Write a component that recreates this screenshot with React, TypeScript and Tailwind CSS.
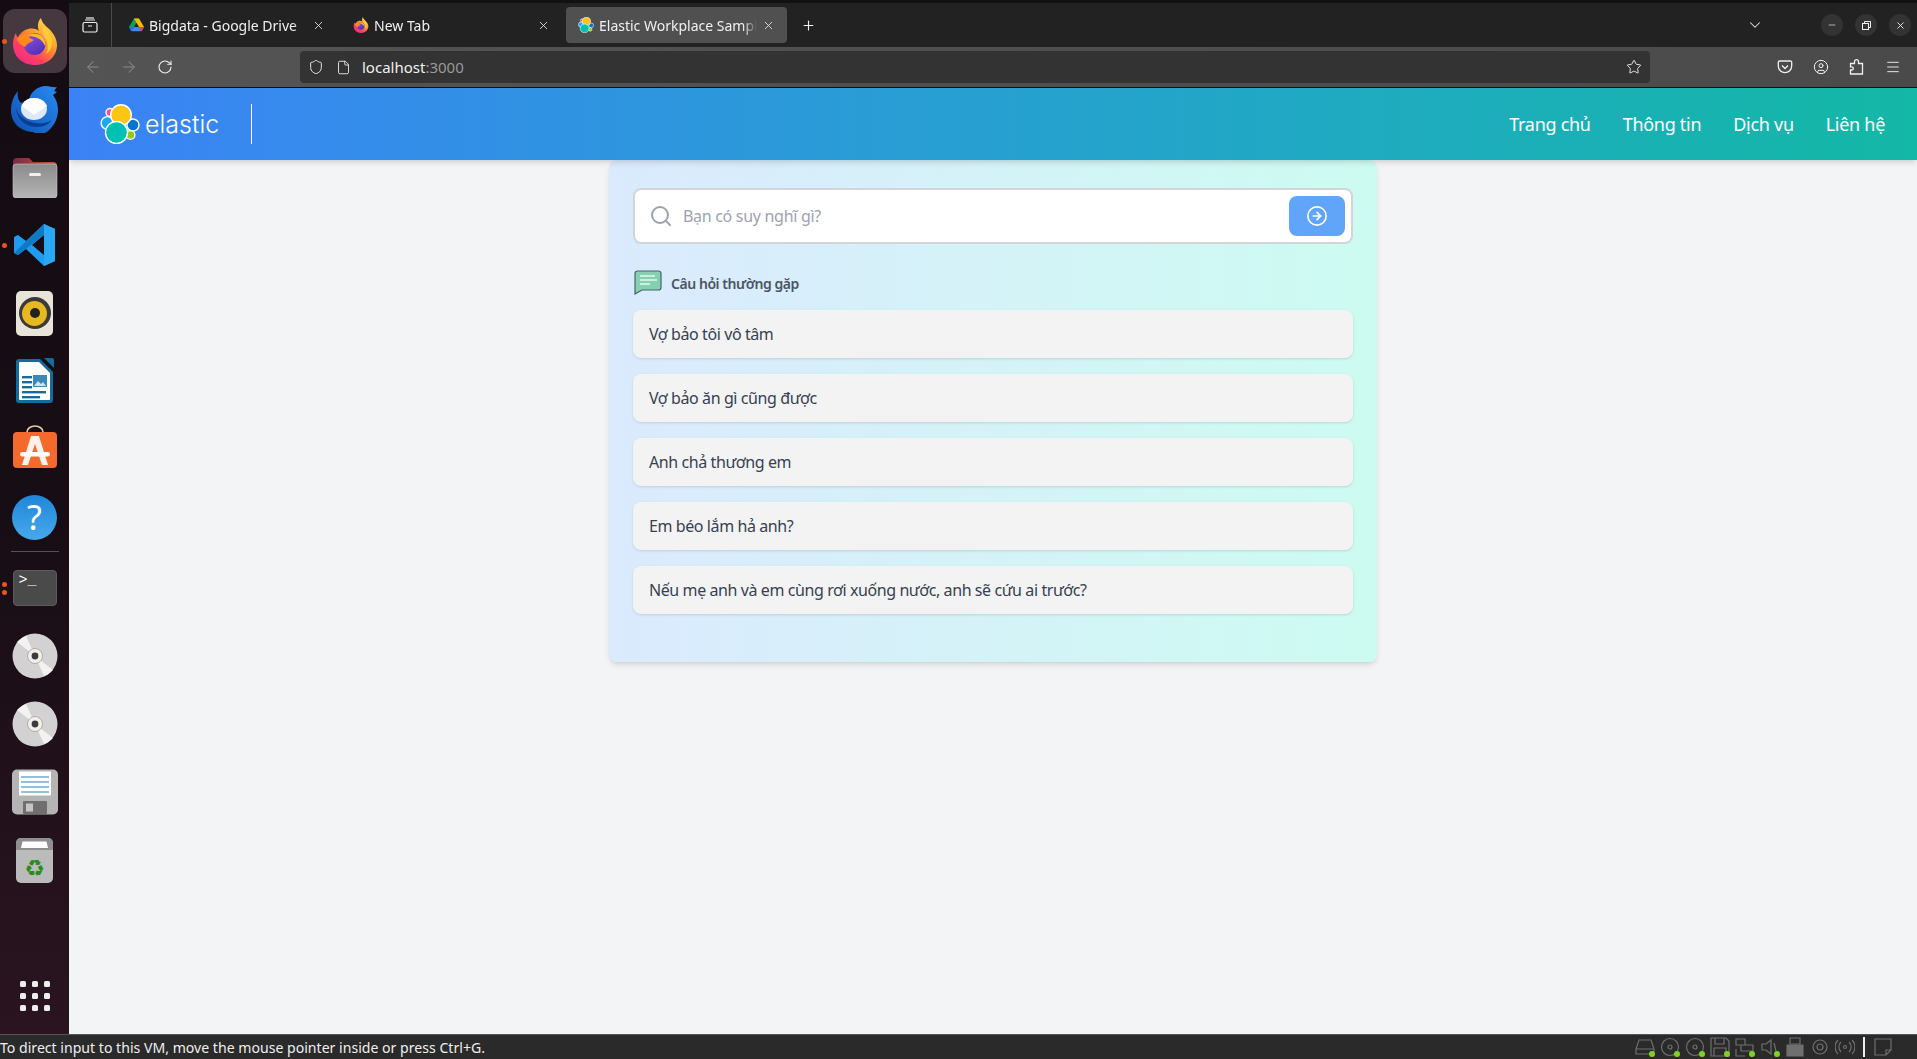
import React from "react";
import {
  ArrowLeft, ArrowRight, RotateCw, Shield, File, Star, CircleUser, Menu, X, Plus,
  ChevronDown, Minus, Search, CircleArrowRight,
} from "lucide-react";

const ui = { fontFamily: '"Noto Sans", sans-serif' };

function ElasticLogo({ size = 40 }: { size?: number }) {
  return (
    <svg width={size} height={size} viewBox="0 0 40 40">
      <g stroke="#fff" strokeWidth="1.4">
        <circle cx="10" cy="8.5" r="4" fill="#f04e98" />
        <circle cx="7.5" cy="19" r="6.4" fill="#1ba9f5" />
        <circle cx="33" cy="21" r="6" fill="#0077cc" />
        <circle cx="30.5" cy="31" r="4.4" fill="#93c90e" />
        <circle cx="21" cy="11" r="10.3" fill="#fec514" />
        <circle cx="16.5" cy="28.5" r="11" fill="#00bfb3" />
      </g>
    </svg>
  );
}

function GoogleDrive() {
  return (
    <svg width="15" height="14" viewBox="0 0 15 14">
      <path d="M5 0.5h5l-5 8.5H0z" fill="#0f9d58" />
      <path d="M10 0.5L15 9h-5L5 0.5z" fill="#fbbc04" />
      <path d="M0 9h15l-2.4 4.3H2.4z" fill="#4285f4" />
      <path d="M0 9h5l-2.6 4.3z" fill="#1a73e8" />
      <path d="M10 9h5l-2.4 4.3z" fill="#ea4335" />
    </svg>
  );
}

function Firefox({ size = 48 }: { size?: number }) {
  const id = `ff${size}`;
  return (
    <svg width={size} height={size} viewBox="0 0 48 48">
      <defs>
        <linearGradient id={`${id}a`} x1="0.85" y1="0.05" x2="0.2" y2="0.95">
          <stop offset="0" stopColor="#ffe14d" />
          <stop offset="0.4" stopColor="#ff9a2e" />
          <stop offset="0.75" stopColor="#ff3f5e" />
          <stop offset="1" stopColor="#f52a8a" />
        </linearGradient>
        <linearGradient id={`${id}b`} x1="0.2" y1="0" x2="0.8" y2="1">
          <stop offset="0" stopColor="#8f4fe0" />
          <stop offset="1" stopColor="#4b2fb5" />
        </linearGradient>
      </defs>
      <path d="M30 1c1 5 4 7 7 10 7 6 9 13 9 17 0 11-9 20-22 20S2 39 2 27c0-4 1-8 3-11 0 2 1 4 2 4 2-4 6-7 10-8 5-1 9 0 11 2-2-5-1-10 2-13z" fill={`url(#${id}a)`} />
      <path d="M33 9c5 4 9 11 8 18-1 5-3 8-6 10 3-6 2-13-2-18-2-3-2-7 0-10z" fill="#ffcb2e" />
      <circle cx="23.5" cy="27" r="11" fill={`url(#${id}b)`} />
      <path d="M6 22c4-5 9-7 15-6l5 2c-3 0-7 0-8 2 1 2 4 2 5 3-2 2-7 3-9 7-3-2-7-4-8-8z" fill="#ff8a1f" />
      <path d="M17 19c4-3 11-3 15 1 2 3 3 6 2 9-2-5-6-8-10-9-3-1-5-1-7-1z" fill="#ffb52e" />
    </svg>
  );
}

function Thunderbird() {
  return (
    <svg width="50" height="48" viewBox="0 0 50 48">
      <defs>
        <linearGradient id="tb" x1="0" y1="1" x2="1" y2="0">
          <stop offset="0" stopColor="#0b4eb0" />
          <stop offset="1" stopColor="#2a8cf0" />
        </linearGradient>
      </defs>
      <path d="M24 47C10 47 1 37 1 26 1 18 3 12 8 6c-1 5 0 9 3 12 3-1 5-2 8-3 1-7 8-14 17-14 4 0 8 2 11 1l-3 4 3 1-4 3c3 4 5 9 5 15 0 14-11 26-24 26z" fill="url(#tb)" />
      <path d="M6 24c1 10 9 18 21 18 7 0 12-3 15-7-5 3-11 4-16 3-9-1-17-6-20-14z" fill="#0a3d96" />
      <ellipse cx="24" cy="24" rx="13" ry="11" fill="#dde8f8" />
      <path d="M11.5 21l12.5 9 13-9c-2-5-7-8-13-8s-10 3-12.500 8z" fill="#fff" />
    </svg>
  );
}

function Folder() {
  return (
    <svg width="46" height="42" viewBox="0 0 46 42">
      <defs>
        <linearGradient id="fdt" x1="0" y1="0" x2="1" y2="0">
          <stop offset="0" stopColor="#7a2a4a" />
          <stop offset="1" stopColor="#d0522a" />
        </linearGradient>
        <linearGradient id="fdb" x1="0" y1="0" x2="0" y2="1">
          <stop offset="0" stopColor="#8b8b8b" />
          <stop offset="1" stopColor="#b5b5b5" />
        </linearGradient>
      </defs>
      <path d="M1 6a4 4 0 014-4h12l4 4h20a4 4 0 014 4v10H1z" fill="url(#fdt)" />
      <path d="M1 11a3 3 0 013-3h38a3 3 0 013 3v28a3 3 0 01-3 3H4a3 3 0 01-3-3z" fill="url(#fdb)" stroke="#c8c8c8" strokeWidth="0.6" />
      <rect x="17" y="17" width="12" height="3" rx="1.5" fill="#f0f0f0" />
    </svg>
  );
}

function VSCode() {
  return (
    <svg width="44" height="44" viewBox="0 0 44 44">
      <path d="M31 1l11 5v32l-11 5-18-17-8 6-4-2V14l4-2 8 6zM31 12L19 22l12 10z" fill="#1f9cf0" />
      <path d="M1 30l30-29v11L5 32z" fill="#0f7ac4" />
      <path d="M31 1l11 5v32l-11 5z" fill="#29a9f5" />
    </svg>
  );
}

function Rhythmbox() {
  return (
    <div className="w-[37px] h-[45px] rounded-[5px] bg-[#e8e4d9] flex items-center justify-center">
      <div className="w-8 h-8 rounded-full bg-[#3a3a38] flex items-center justify-center">
        <div className="w-[25px] h-[25px] rounded-full bg-[#e8b820] flex items-center justify-center">
          <div className="w-[10px] h-[10px] rounded-full bg-[#222]" />
        </div>
      </div>
    </div>
  );
}

function Writer() {
  return (
    <svg width="38" height="46" viewBox="0 0 38 46">
      <path d="M3 1h21l13 13v28a3 3 0 01-3 3H3a3 3 0 01-3-3V4a3 3 0 013-3z" fill="#156a9e" />
      <path d="M4 4h19l11 11v26a1 1 0 01-1 1H4a1 1 0 01-1-1V5a1 1 0 011-1z" fill="#fff" />
      <path d="M28 0h8a2 2 0 012 2v8z" fill="#156a9e" />
      <rect x="6" y="18" width="10" height="2.4" fill="#156a9e" />
      <rect x="6" y="23" width="10" height="2.4" fill="#156a9e" />
      <rect x="6" y="28" width="10" height="2.4" fill="#156a9e" />
      <rect x="6" y="33" width="24" height="2.4" fill="#156a9e" />
      <rect x="6" y="38" width="18" height="2.4" fill="#156a9e" />
      <rect x="17" y="17" width="14" height="12" fill="#3b89b8" />
      <path d="M18 28l4-5 3 3 2-2 3 4z" fill="#cfe4f0" />
    </svg>
  );
}

function AppCenter() {
  return (
    <svg width="46" height="44" viewBox="0 0 46 44" className="-mt-[4px]">
      <path d="M15 9V7a8 6 0 0116 0v2" fill="none" stroke="#e8c8a0" strokeWidth="1.6" />
      <rect x="1" y="7" width="44" height="36" rx="4" fill="#f4692c" />
      <path d="M19 11h8l9 29h-6l-7-21-7 21h-6z" fill="#fff" opacity="0.9" />
      <rect x="8" y="27" width="30" height="4.4" rx="2.2" fill="#fff" />
    </svg>
  );
}

function Disc() {
  return (
    <svg width="46" height="46" viewBox="0 0 46 46">
      <circle cx="23" cy="23" r="22.5" fill="#d2d2d2" />
      <path d="M23 23L5 9a22.5 22.5 0 019-6zM23 23l18 14a22.5 22.5 0 01-9 6z" fill="#f2f2f2" />
      <circle cx="23" cy="23" r="7.5" fill="#f2efe8" stroke="#a89f8c" strokeWidth="0.8" />
      <circle cx="23" cy="23" r="3.4" fill="#3c3c3c" />
    </svg>
  );
}

function Floppy() {
  return (
    <svg width="46" height="46" viewBox="0 0 46 46">
      <rect width="46" height="45" y="0.5" rx="5" fill="#b4b4b4" />
      <rect x="7" y="2.5" width="32" height="24" fill="#fff" />
      <path d="M9 8h28M9 13h28M9 18h28M9 23h28" stroke="#1b85b8" strokeWidth="1" />
      <rect x="11" y="32" width="24" height="13" rx="1" fill="#6f6f6f" />
      <rect x="14" y="34.5" width="7" height="8" fill="#c6c6c6" />
    </svg>
  );
}

function Trash() {
  return (
    <div className="relative w-[37px] h-[45px] rounded-[5px] bg-[#bbbbbb] flex items-end justify-center overflow-hidden">
      <svg width="37" height="12" viewBox="0 0 37 12" className="absolute top-0 left-0">
        <rect width="37" height="12" fill="#8f8f8f" />
        <path d="M5 10l1.500-6.500h24L32 10z" fill="#fff" />
      </svg>
      <span className="text-[#2a8c1c] text-[23px] leading-[30px] font-['DejaVu_Sans',sans-serif]">♻</span>
    </div>
  );
}

function DockItem({ dots = 0, children }: { dots?: number; children: React.ReactNode }) {
  return (
    <div className="relative h-[68px] flex items-center justify-center shrink-0">
      {dots > 0 && (
        <div className="absolute left-[2px] top-0 bottom-0 flex flex-col justify-center gap-[3px]">
          {Array.from({ length: dots }).map((_, i) => (
            <span key={i} className="block w-[5px] h-[5px] rounded-full bg-[#e95420]" />
          ))}
        </div>
      )}
      {children}
    </div>
  );
}

function Dock() {
  return (
    <aside className="w-[69px] shrink-0 flex flex-col pt-[7px] pb-[23px] bg-gradient-to-b from-[#150c13] via-[#170d15] to-[#2a1420]">
      <DockItem dots={1}>
        <div className="w-16 h-16 rounded-[12px] bg-[#45393f] flex items-center justify-center">
          <Firefox />
        </div>
      </DockItem>
      <DockItem><Thunderbird /></DockItem>
      <DockItem><Folder /></DockItem>
      <DockItem dots={1}><VSCode /></DockItem>
      <DockItem><Rhythmbox /></DockItem>
      <DockItem><Writer /></DockItem>
      <DockItem><AppCenter /></DockItem>
      <DockItem>
        <div className="w-[45px] h-[45px] rounded-full bg-gradient-to-b from-[#1f86d8] to-[#45aaeb] flex items-center justify-center text-white text-[34px] leading-none" style={ui}>?</div>
      </DockItem>
      <div className="h-[3px] shrink-0 flex items-start justify-center">
        <div className="w-12 h-px bg-[#55505a]" />
      </div>
      <DockItem dots={2}>
        <div className="w-11 h-9 rounded-[4px] bg-[#4a4a4a] border border-[#5c5c5c] px-[5px] text-white text-[15px] leading-[20px] font-['Liberation_Mono',monospace]">
          &gt;_
        </div>
      </DockItem>
      <DockItem><Disc /></DockItem>
      <DockItem><Disc /></DockItem>
      <DockItem><Floppy /></DockItem>
      <DockItem><Trash /></DockItem>
      <div className="mt-auto flex justify-center">
        <div className="grid grid-cols-3 gap-[6px]">
          {Array.from({ length: 9 }).map((_, i) => (
            <span key={i} className="block w-[6px] h-[6px] rounded-[1.5px] bg-[#eeeeee]" />
          ))}
        </div>
      </div>
    </aside>
  );
}

function Tab({ icon, title, active }: { icon: React.ReactNode; title: string; active?: boolean }) {
  return (
    <div className={`w-[221px] h-[36px] shrink-0 rounded-[4px] flex items-center pl-[12px] pr-[12px] gap-[5px] text-[14px] text-[#f0f0f0] ${active ? "bg-[#505050]" : ""}`}>
      <span className="w-4 h-4 shrink-0 flex items-center justify-center">{icon}</span>
      <span className="flex-1 overflow-hidden whitespace-nowrap [mask-image:linear-gradient(to_left,transparent,black_14px)]">{title}</span>
      <X size={13} strokeWidth={1.6} className="shrink-0 text-[#e5e5e5]" />
    </div>
  );
}

function WinButton({ children }: { children: React.ReactNode }) {
  return (
    <div className="w-[22px] h-[22px] rounded-full bg-[#333333] flex items-center justify-center text-[#f0f0f0]">
      {children}
    </div>
  );
}

function Browser() {
  return (
    <div className="shrink-0" style={ui}>
      <div className="h-[3px] bg-[#111111]" />
      <div className="h-[44px] bg-[#222222] flex items-center">
        <div className="w-[42px] flex justify-center">
          <svg width="16" height="16" viewBox="0 0 16 16" fill="none" stroke="#f0f0f0" strokeWidth="1.2">
            <rect x="1" y="5.500" width="14" height="9.500" rx="1.500" />
            <path d="M3 3h10M6 9h4" />
            <path d="M4 1h8" />
          </svg>
        </div>
        <div className="w-px h-[44px] bg-[#4a4a4a]" />
        <div className="flex gap-[4px] ml-[4px]">
          <Tab icon={<GoogleDrive />} title="Bigdata - Google Drive" />
          <Tab icon={<Firefox size={16} />} title="New Tab" />
          <Tab icon={<ElasticLogo size={16} />} title="Elastic Workplace Sample" active />
        </div>
        <Plus size={15} strokeWidth={1.8} className="ml-[14px] text-[#f0f0f0]" />
        <div className="flex-1" />
        <ChevronDown size={18} strokeWidth={1.4} className="text-[#e5e5e5] mr-[57px]" />
        <div className="flex gap-[12px] mr-[6px]">
          <WinButton><Minus size={10} strokeWidth={1.6} /></WinButton>
          <WinButton>
            <svg width="9" height="9" viewBox="0 0 9 9" fill="none" stroke="currentColor" strokeWidth="1"><rect x="0.500" y="2.500" width="6" height="6" /><path d="M2.500 2.500v-2h6v6h-2" /></svg>
          </WinButton>
          <WinButton><X size={11} strokeWidth={2} /></WinButton>
        </div>
      </div>
      <div className="h-[41px] bg-gradient-to-r from-[#545454] to-[#4a4a4a] flex items-center border-b border-[#111111]">
        <div className="w-[231px] shrink-0 pl-[15px] flex items-center gap-[18px]">
          <ArrowLeft size={18} strokeWidth={1.4} className="text-[#8a8a8a]" />
          <ArrowRight size={18} strokeWidth={1.4} className="text-[#8a8a8a]" />
          <RotateCw size={16} strokeWidth={1.6} className="text-[#f0f0f0] ml-[1px]" />
        </div>
        <div className="w-[1350px] h-[32px] rounded-[4px] bg-[#333333] flex items-center pl-[8px] pr-[8px] text-[#f0f0f0]">
          <Shield size={16} strokeWidth={1.4} />
          <File size={15} strokeWidth={1.4} className="ml-[12px]" />
          <span className="ml-[11px] text-[15px]">localhost<span className="text-[#9a9a9a]">:3000</span></span>
          <Star size={16} strokeWidth={1.4} className="ml-auto" />
        </div>
        <div className="flex-1 flex justify-end items-center gap-[20px] pr-[16px] text-[#f0f0f0]">
          <svg width="16" height="16" viewBox="0 0 16 16" fill="none" stroke="currentColor" strokeWidth="1.3">
            <path d="M2.500 2h11a1.200 1.200 0 011.200 1.200V7a6.700 6.700 0 01-13.400 0V3.200A1.200 1.200 0 012.500 2z" />
            <path d="M5 6.500l3 3 3-3" />
          </svg>
          <CircleUser size={16} strokeWidth={1.5} />
          <svg width="16" height="16" viewBox="0 0 16 16" fill="none" stroke="currentColor" strokeWidth="1.300">
            <path d="M1.500 15v-4h1.200a1.600 1.600 0 000-3.200H1.500V4.500h4V2.700a2 2 0 014 0v1.800h4V15z" />
          </svg>
          <Menu size={16} strokeWidth={1.4} />
        </div>
      </div>
    </div>
  );
}

function Header() {
  return (
    <header className="h-[72px] shrink-0 flex items-center justify-between pl-[31px] pr-[32px] bg-gradient-to-r from-[#3b82f6] to-[#14b8a6] shadow-md relative z-10 font-['Noto_Sans',sans-serif]">
      <div className="flex items-center">
        <ElasticLogo />
        <span className="ml-[5px] text-[25px] leading-none font-light text-white font-['Inter',sans-serif]">elastic</span>
        <div className="w-px h-10 bg-white ml-[32px]" />
      </div>
      <nav className="flex gap-[32px] text-[18px] tracking-[-0.29px] text-white">
        <span>Trang chủ</span>
        <span>Thông tin</span>
        <span>Dịch vụ</span>
        <span>Liên hệ</span>
      </nav>
    </header>
  );
}

const questions = [
  "Vợ bảo tôi vô tâm",
  "Vợ bảo ăn gì cũng được",
  "Anh chả thương em",
  "Em béo lắm hả anh?",
  "Nếu mẹ anh và em cùng rơi xuống nước, anh sẽ cứu ai trước?",
];

function ChatIcon() {
  return (
    <svg width="28" height="25" viewBox="0 0 28 25">
      <path d="M3.500 1h21A2.500 2.500 0 0127 3.500v14a2.500 2.500 0 01-2.500 2.500H8l-7 4V3.500A2.500 2.500 0 013.500 1z" fill="#86d0b2" stroke="#46656a" strokeWidth="1.200" />
      <path d="M6 6h15M6 10h17M6 14h10" stroke="#e4f7ee" strokeWidth="1.600" />
    </svg>
  );
}

function SearchCard() {
  return (
    <section className="w-[768px] mx-auto rounded-lg bg-gradient-to-r from-[#dbeafe] to-[#ccfbf1] shadow-md px-6 pt-[28px] pb-[48px]">
      <div className="relative h-[56px] rounded-lg border-2 border-[#d4d4d8] bg-white flex items-center">
        <Search size={24} strokeWidth={2} className="absolute left-[14px] text-[#9ca3af]" />
        <input
          className="flex-1 h-full pl-[48px] bg-transparent outline-none text-[16px] tracking-[-0.3px] placeholder:text-[#9ca3af]"
          placeholder="Bạn có suy nghĩ gì?"
        />
        <button className="w-14 h-10 mr-[6px] rounded-lg bg-[#60a5fa] flex items-center justify-center text-white">
          <CircleArrowRight size={22} strokeWidth={1.8} />
        </button>
      </div>
      <div className="mt-[25px] h-[26px] flex items-center gap-[9px] pl-[1px]">
        <ChatIcon />
        <span className="text-[14px] tracking-[-0.45px] font-semibold text-[#4b5563] mt-[2px]">Câu hỏi thường gặp</span>
      </div>
      <ul className="mt-[15px] flex flex-col gap-4">
        {questions.map((q) => (
          <li key={q} className="h-12 rounded-lg bg-[#f3f3f3] shadow-sm px-4 flex items-center text-[16px] tracking-[-0.41px] text-[#374151]">
            {q}
          </li>
        ))}
      </ul>
    </section>
  );
}

function StatusIcon({ dot = true, children }: { dot?: boolean; children: React.ReactNode }) {
  return (
    <span className="relative block w-[20px] h-[20px]">
      <svg width="20" height="20" viewBox="0 0 20 20" fill="none" stroke="#6f6f6f" strokeWidth="1.200">{children}</svg>
      {dot && <span className="absolute right-0 bottom-0 w-[6px] h-[6px] rounded-full bg-[#7ed321]" />}
    </span>
  );
}

function StatusBar() {
  return (
    <footer className="h-[25px] shrink-0 bg-[#2a2a2a] border-t border-[#555555] flex items-center justify-between text-[14.1px] text-[#eeeeee]" style={ui}>
      <span className="pt-[1px]">To direct input to this VM, move the mouse pointer inside or press Ctrl+G.</span>
      <div className="flex items-center gap-[5px] pr-[24px]">
        <StatusIcon><path d="M4 3h12l3 9v5H1v-5zM1 12h18" /></StatusIcon>
        <StatusIcon><circle cx="10" cy="10" r="8.500" /><circle cx="10" cy="10" r="2" /></StatusIcon>
        <StatusIcon><circle cx="10" cy="10" r="8.500" /><circle cx="10" cy="10" r="2" /></StatusIcon>
        <StatusIcon><path d="M1 1h15l3 3v15H1zM5 1v6h9V1M4 19v-8h12v8" /></StatusIcon>
        <StatusIcon><path d="M1 2h9v6H1zM6 8h12v6H6zM1 12v7h9" /></StatusIcon>
        <StatusIcon><path d="M2 7h4l5-4v14l-5-4H2zM14 6l2 8" /></StatusIcon>
        <StatusIcon dot={false}><path d="M5 1h10v6H5z" /><path d="M2 8h16v11H2z" fill="#6f6f6f" /></StatusIcon>
        <StatusIcon dot={false}><circle cx="10" cy="10" r="7" /><circle cx="10" cy="10" r="3" /></StatusIcon>
        <StatusIcon dot={false}><circle cx="10" cy="10" r="1.500" /><path d="M6 5a7 7 0 000 10M14 5a7 7 0 010 10M3 3a10 10 0 000 14M17 3a10 10 0 010 14" /></StatusIcon>
        <div className="w-[2px] h-5 bg-[#eeeeee] mx-[3px]" />
        <StatusIcon dot={false}><path d="M2 2h16v11l-5 5H2zM13 18v-5h5" /></StatusIcon>
      </div>
    </footer>
  );
}

export default function App() {
  return (
    <div className="h-screen w-full flex flex-col overflow-hidden bg-[#f3f4f6]">
      <div className="flex-1 flex min-h-0">
        <Dock />
        <div className="flex-1 min-w-0 flex flex-col">
          <Browser />
          <Header />
          <main className="flex-1 font-['Noto_Sans',sans-serif]">
            <SearchCard />
          </main>
        </div>
      </div>
      <StatusBar />
    </div>
  );
}
